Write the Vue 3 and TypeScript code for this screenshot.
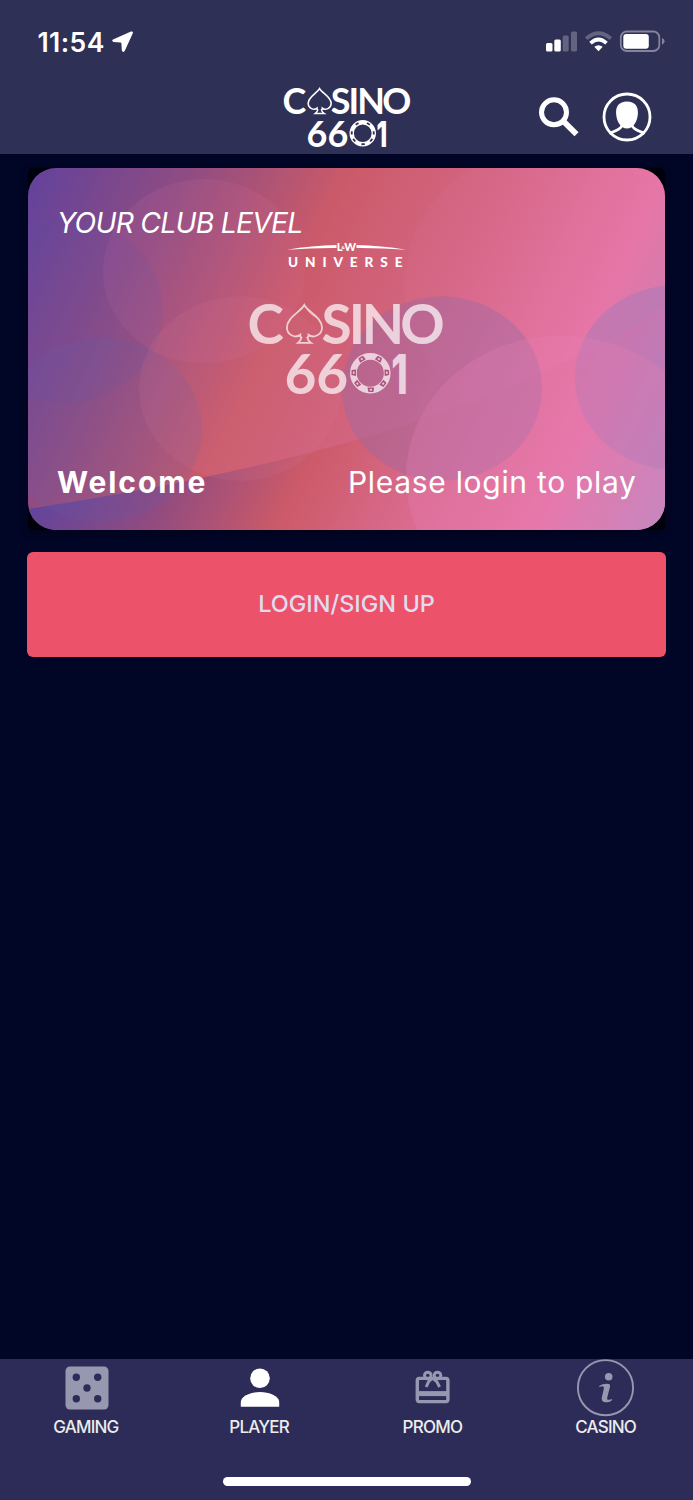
<script setup lang="ts">
interface Glyphs {
  chars: string
  x: string
  y: number
}

interface Ellipse {
  cx: number
  cy: number
  rx: number
  ry: number
  fill: string
}

const logoGlyphs: Glyphs[] = [
  { chars: 'C', x: '-2.5', y: 40 },
  { chars: 'SINO', x: '71.5 98.7 111.8 150.3', y: 40 },
  { chars: '66', x: '34.5 66.3', y: 89.5 },
]

const chipMarks: number[] = [-31, 31, 88, 129, 178, 231, 272]

const bubbles: Ellipse[] = [
  { cx: 176, cy: 103, rx: 101, ry: 92, fill: 'rgba(215,115,165,0.14)' },
  { cx: 34, cy: 142, rx: 101, ry: 92, fill: 'rgba(95,85,175,0.13)' },
  { cx: 73, cy: 261, rx: 101, ry: 92, fill: 'rgba(95,95,175,0.17)' },
  { cx: 212, cy: 220, rx: 101, ry: 92, fill: 'rgba(215,120,155,0.14)' },
  { cx: 531, cy: 116, rx: 155, ry: 141, fill: 'rgba(232,125,175,0.08)' },
  { cx: 414, cy: 220, rx: 100, ry: 92, fill: 'rgba(140,105,168,0.36)' },
  { cx: 648, cy: 209, rx: 101, ry: 92, fill: 'rgba(150,120,190,0.38)' },
  { cx: 533, cy: 308, rx: 155, ry: 141, fill: 'rgba(230,125,180,0.3)' },
]

type TabIcon = 'dice' | 'person' | 'gift' | 'info'
const tabs: { label: string; icon: TabIcon }[] = [
  { label: 'GAMING', icon: 'dice' },
  { label: 'PLAYER', icon: 'person' },
  { label: 'PROMO', icon: 'gift' },
  { label: 'CASINO', icon: 'info' },
]
</script>

<template>
  <div class="screen">
    <header class="header">
      <div class="status">
        <span class="time">11:54</span>
        <svg class="arrow" width="22" height="22" viewBox="0 0 22 22">
          <path d="M1 8.6 19 .6Q21.6-.2 20.8 2.3L12.7 19.9Q11 22 9.8 19.6L9.4 12.4Q9.3 11.6 8.5 11.5L1.4 11Q-.7 9.8 1 8.6Z" fill="#fff" />
        </svg>
        <svg class="signals" width="120" height="24" viewBox="0 0 120 24">
          <g fill="#fff">
            <rect x="1" y="13" width="6.5" height="8.5" rx="1.5" />
            <rect x="9.3" y="9.5" width="6.5" height="12" rx="1.5" />
            <rect x="17.7" y="5.5" width="6" height="16" rx="1.5" opacity=".25" />
            <rect x="26" y="1.5" width="6" height="20" rx="1.5" opacity=".25" />
          </g>
          <g fill="none" stroke="#fff" stroke-width="3.7">
            <path d="M41.2 8.6Q53.5 -2.2 65.8 8.6" opacity=".25" />
            <path d="M45.5 13.2Q53.5 5.8 61.5 13.2" />
          </g>
          <path d="M49.3 16.8Q53.5 13.8 57.7 16.8L53.5 21.3Z" fill="#fff" />
          <rect x="75.8" y="1.5" width="38.5" height="19.5" rx="6" fill="none" stroke="#84849a" stroke-width="1.8" />
          <rect x="78.3" y="4" width="25.5" height="14.8" rx="3" fill="#fff" />
          <path d="M117 8Q119.6 9 119.6 11.3T117 14.8Z" fill="#84849a" />
        </svg>
      </div>
      <div class="topbar">
        <svg class="brand" width="127" height="59.5" viewBox="0 0 194 91">
          <g class="wordmark" fill="#fff">
            <text v-for="(g, i) in logoGlyphs" :key="i" :x="g.x" :y="g.y">{{ g.chars }}</text>
            <text class="one" transform="translate(157.8 89.5) scale(.68 1)">1</text>
          </g>
          <path d="M54.3 1C50.5 8 36.9 13.5 36.9 23.5C36.9 31.5 46 34.5 50.3 30.8V32.5L51.5 33.5Q50.5 37 48 38.9H61Q58 37 57.3 33.5L58.5 32.5V30.8C63 34.5 72 31.5 72 23.5C72 13.5 58 8 54.3 1Z" fill="none" stroke="#fff" stroke-width="2.4" />
          <circle cx="120.3" cy="69.2" r="16.9" fill="none" stroke="#fff" stroke-width="6.7" />
          <g fill="#2f3056">
            <rect v-for="a in chipMarks" :key="a" x="117.7" y="51" width="5.2" height="2.8" :transform="`rotate(${a} 120.3 69.2)`" />
          </g>
        </svg>
        <div class="actions">
          <svg width="42" height="42" viewBox="0 0 42 42">
            <circle cx="16" cy="16.3" r="12.5" fill="none" stroke="#fff" stroke-width="5" />
            <path d="M25.4 25.2 38.5 38.3" stroke="#fff" stroke-width="5.8" />
          </svg>
          <svg width="50" height="50" viewBox="0 0 50 50">
            <circle cx="25" cy="25" r="23" fill="none" stroke="#fff" stroke-width="2.8" />
            <path d="M25 9.6C33 9.6 36.3 14.5 35.9 21.5C35.6 29 31.5 36.5 25 36.5S14.4 29 14.1 21.5C13.7 14.5 17 9.6 25 9.6Z" fill="#fff" />
            <path d="M19.8 33.5C19 38 12.5 38.7 7.5 41.7M30.2 33.5C31 38 37.5 38.7 42.5 41.7" fill="none" stroke="#fff" stroke-width="2.8" />
          </svg>
        </div>
      </div>
    </header>

    <main class="content">
      <section class="card-frame">
        <div class="card">
          <svg class="card-art" width="637" height="362" viewBox="0 0 637 361" preserveAspectRatio="none">
            <defs>
              <linearGradient id="upper" gradientUnits="userSpaceOnUse" x1="0" y1="0" x2="570" y2="274">
                <stop offset="0" stop-color="#61429c" />
                <stop offset=".23" stop-color="#8f4c82" />
                <stop offset=".46" stop-color="#cb5a69" />
                <stop offset=".64" stop-color="#d3647f" />
                <stop offset=".91" stop-color="#e676a6" />
                <stop offset="1" stop-color="#d57bae" />
              </linearGradient>
              <linearGradient id="lower" gradientUnits="userSpaceOnUse" x1="0" y1="341" x2="524" y2="593">
                <stop offset="0" stop-color="#61449c" />
                <stop offset=".2" stop-color="#914b80" />
                <stop offset=".4" stop-color="#cc5a68" />
                <stop offset=".6" stop-color="#da6b8f" />
                <stop offset=".8" stop-color="#e875a8" />
                <stop offset="1" stop-color="#b88bc4" />
              </linearGradient>
            </defs>
            <rect width="637" height="361" fill="url(#upper)" />
            <path d="M0 340Q230 305 390 252Q530 205 637 138V361H0Z" fill="url(#lower)" />
            <ellipse v-for="(b, i) in bubbles" :key="i" :cx="b.cx" :cy="b.cy" :rx="b.rx" :ry="b.ry" :fill="b.fill" />
          </svg>
          <div class="card-body">
            <div class="level">YOUR CLUB LEVEL</div>
            <svg class="universe" width="120" height="28" viewBox="0 0 120 28">
              <path d="M0 7.8Q25 3.6 49.5 3.1V5.9Q25 5.7 0 7.8ZM119 7.8Q94 3.6 69.5 3.1V5.9Q94 5.7 119 7.8Z" fill="#fff" />
              <g class="lw" fill="#fff">
                <text x="49.8" y="8.8" font-size="11.3">L</text>
                <text x="54.5" y="6.8" font-size="4.5">&amp;</text>
                <text x="57.3" y="8.8" font-size="11.3" textLength="11.8" lengthAdjust="spacingAndGlyphs">W</text>
                <text x="1" y="24.9" font-size="13.6" textLength="114.5" lengthAdjust="spacing">UNIVERSE</text>
              </g>
            </svg>
            <svg class="card-logo" width="194" height="91" viewBox="0 0 194 91">
              <g opacity=".7">
                <g class="wordmark" fill="#fff">
                  <text v-for="(g, i) in logoGlyphs" :key="i" :x="g.x" :y="g.y">{{ g.chars }}</text>
                  <text class="one" transform="translate(157.8 89.5) scale(.68 1)">1</text>
                </g>
                <path d="M54.3 1C50.5 8 36.9 13.5 36.9 23.5C36.9 31.5 46 34.5 50.3 30.8V32.5L51.5 33.5Q50.5 37 48 38.9H61Q58 37 57.3 33.5L58.5 32.5V30.8C63 34.5 72 31.5 72 23.5C72 13.5 58 8 54.3 1Z" fill="none" stroke="#fff" stroke-width="1.8" />
                <path d="M57.5 6Q60.5 10 64.5 12.5" fill="none" stroke="#fff" stroke-width=".8" />
                <circle cx="120.3" cy="69.2" r="16.9" fill="none" stroke="#fff" stroke-width="6.7" />
              </g>
              <g fill="#b0507f">
                <g v-for="a in chipMarks" :key="a" :transform="`rotate(${a} 120.3 69.2)`">
                  <path d="M117.8 50.4H122.8L123.6 54.9H117Z" />
                  <path d="M119.2 51.8H121.4V53.5H119.2Z" fill="#edcbd9" />
                </g>
              </g>
            </svg>
            <div class="card-foot">
              <span class="welcome">Welcome</span>
              <span class="hint">Please login to play</span>
            </div>
          </div>
        </div>
      </section>
      <button class="login">LOGIN/SIGN UP</button>
    </main>

    <nav class="tabs">
      <div class="tab-row">
        <div v-for="tab in tabs" :key="tab.label" class="tab">
          <svg class="tab-icon" width="58" height="58" viewBox="0 0 58 58">
            <g v-if="tab.icon === 'dice'">
              <rect x="7.5" y="7.5" width="43" height="43" rx="4.5" fill="#9797b0" />
              <g fill="#2d2c58">
                <circle cx="18.3" cy="18.3" r="3.7" />
                <circle cx="39.7" cy="18.3" r="3.7" />
                <circle cx="29" cy="29" r="3.7" />
                <circle cx="18.3" cy="39.7" r="3.7" />
                <circle cx="39.7" cy="39.7" r="3.7" />
              </g>
            </g>
            <g v-else-if="tab.icon === 'person'" fill="#fff">
              <circle cx="29" cy="19.3" r="9.8" />
              <path d="M9.8 47.8V43C9.8 37 20 33 29 33S48.2 37 48.2 43V47.8Z" />
            </g>
            <g v-else-if="tab.icon === 'gift'" fill="none" stroke="#9797b0">
              <rect x="13.3" y="19.4" width="30.6" height="23.2" rx="2" stroke-width="3.4" />
              <path d="M13.5 34.6H43.5" stroke-width="5" />
              <circle cx="23.8" cy="16.5" r="3.3" stroke-width="3" />
              <circle cx="33.5" cy="16.5" r="3.3" stroke-width="3" />
              <path d="M28.6 19 24.6 22.6 22.2 28M28.6 19 32.8 22.6 35.6 28" stroke-width="3" />
            </g>
            <g v-else fill="#9797b0">
              <circle cx="28.5" cy="28.7" r="27.6" fill="none" stroke="#9797b0" stroke-width="1.9" />
              <circle cx="31.7" cy="17.8" r="3.8" />
              <path d="M22.2 27.1Q26.5 24.1 32 25.1Q33.5 25.5 33 27.8L30.3 38.3Q29.5 41.3 32.5 40.8L35.2 40Q35.2 42 31.7 43Q24.5 44.6 24.7 39.3L26.8 29.8Q27.3 27.3 25.3 27.3L22.3 28Z" />
            </g>
          </svg>
          <span class="tab-label">{{ tab.label }}</span>
        </div>
      </div>
      <div class="home-bar"></div>
    </nav>
  </div>
</template>

<style>
body {
  margin: 0;
  background: #020626;
}
</style>

<style scoped>
.screen {
  width: 693px;
  height: 1500px;
  display: flex;
  flex-direction: column;
  overflow: hidden;
  background: #020626;
  color: #fff;
  font-family: Inter, "Liberation Sans", sans-serif;
}
svg {
  overflow: visible;
}
.header {
  height: 154px;
  flex: none;
  background: #2f3056;
}
.status {
  height: 84px;
  padding: 0 28px 0 37.5px;
  box-sizing: border-box;
  display: flex;
  align-items: center;
}
.time {
  font-size: 26.5px;
  font-weight: 600;
  letter-spacing: 0.4px;
}
.arrow {
  margin-left: 7px;
}
.signals {
  margin-left: auto;
}
.topbar {
  display: grid;
  grid-template-columns: 1fr 127px 1fr;
  align-items: start;
  padding-top: 4px;
}
.brand {
  grid-column: 2;
  margin-left: 0.5px;
}
.wordmark {
  font-family: Lato, sans-serif;
  font-weight: 700;
  font-size: 55px;
}
.one {
  font-family: Inter, sans-serif;
  font-weight: 800;
  text-anchor: end;
}
.actions {
  display: flex;
  justify-content: flex-end;
  align-items: center;
  gap: 22px;
  padding: 4px 41.5px 0 0;
}
.content {
  flex: 1;
  padding: 14px 27px 0;
}
.card-frame {
  margin: 0 1px;
  width: 637px;
  height: 362px;
  background: #00000a;
  border-radius: 5px;
  box-shadow: 0 3px 7px rgba(0, 0, 10, 0.45);
}
.card {
  display: grid;
  width: 637px;
  height: 362px;
  border-radius: 28px;
  overflow: hidden;
}
.card-art,
.card-body {
  grid-area: 1 / 1;
}
.card-body {
  z-index: 1;
  display: flex;
  flex-direction: column;
  align-items: center;
  padding: 37px 29px 28px;
}
.level {
  align-self: flex-start;
  height: 36px;
  line-height: 36px;
  font-size: 28.3px;
  font-style: italic;
  letter-spacing: -0.75px;
  white-space: nowrap;
}
.universe {
  margin-top: 0.5px;
}
.lw {
  font-family: Lato, sans-serif;
  font-weight: 900;
}
.card-logo {
  margin-top: 34.5px;
}
.card-foot {
  align-self: stretch;
  margin-top: auto;
  display: flex;
  justify-content: space-between;
  align-items: center;
  line-height: 40px;
  font-size: 30px;
  white-space: nowrap;
}
.welcome {
  font-weight: 700;
  letter-spacing: 1.9px;
}
.hint {
  margin-right: -0.7px;
  font-weight: 400;
  letter-spacing: 0.7px;
}
.login {
  display: block;
  width: 639px;
  height: 105px;
  margin-top: 22px;
  padding: 0 0 2px;
  border: 0;
  border-radius: 6px;
  background: #ed526b;
  color: #e0dcf0;
  font-family: inherit;
  font-size: 23.5px;
  font-weight: 500;
}
.tabs {
  height: 141px;
  flex: none;
  background: #2d2c58;
}
.tab-row {
  display: grid;
  grid-template-columns: repeat(4, 1fr);
}
.tab {
  display: flex;
  flex-direction: column;
  align-items: center;
  height: 118px;
  color: #ececec;
  font-size: 17px;
  font-weight: 500;
  line-height: 20px;
  letter-spacing: -0.8px;
}
.tab-icon {
  flex: none;
}
.tab-label {
  margin-right: 1.5px;
}
.home-bar {
  width: 248px;
  height: 9px;
  margin: 0 auto;
  border-radius: 5px;
  background: #fff;
}
</style>
